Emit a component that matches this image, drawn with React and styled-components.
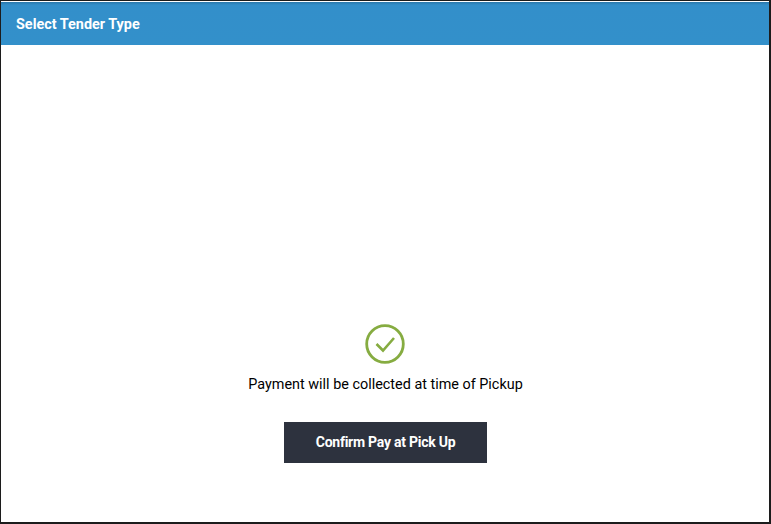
import React from "react";
import styled, { createGlobalStyle } from "styled-components";

const GlobalStyle = createGlobalStyle`
  html, body {
    margin: 0;
    padding: 0;
    background: #fff;
  }

  body {
    font-family: Roboto, "Liberation Sans", sans-serif;
  }
`;

const Modal = styled.div`
  box-sizing: border-box;
  width: 771px;
  height: 524px;
  display: flex;
  flex-direction: column;
  background: #fff;
  border: 1px solid #1c1c1c;
  border-right-width: 2px;
  border-bottom-width: 2px;
`;

const Header = styled.div`
  box-sizing: border-box;
  height: 43px;
  margin-top: 1px;
  padding: 2px 0 0 15px;
  display: flex;
  align-items: center;
  background: linear-gradient(#2a77aa 0, #338fca 3px, #3390ca 100%);
  color: #fff;
  font-size: 14.4px;
  font-weight: 700;
`;

const Body = styled.div`
  flex: 1;
  display: flex;
  flex-direction: column;
  align-items: center;
  padding-top: 279px;
`;

const Icon = styled.svg`
  display: block;
  width: 40px;
  height: 40px;
  color: #86ac41;
`;

const Message = styled.p`
  margin: 12px 0 0;
  padding-left: 1px;
  font-size: 14.4px;
  line-height: 18px;
  color: #000;
`;

const ConfirmButton = styled.button`
  margin-top: 28px;
  width: 203px;
  height: 41px;
  border: none;
  padding: 0 0 2px 1px;
  background: #2d323e;
  color: #fff;
  font-family: inherit;
  font-size: 14px;
  font-weight: 700;
  letter-spacing: -0.25px;
`;

export default function App() {
  return (
    <>
      <GlobalStyle />
      <Modal>
        <Header>Select Tender Type</Header>
        <Body>
          <Icon viewBox="0 0 40 40" fill="none" stroke="currentColor">
            <circle cx="20" cy="20" r="18.3" strokeWidth="2.8" />
            <path d="M11.5 20l6.5 6.5L29 14" strokeWidth="2.6" />
          </Icon>
          <Message>Payment will be collected at time of Pickup</Message>
          <ConfirmButton>Confirm Pay at Pick Up</ConfirmButton>
        </Body>
      </Modal>
    </>
  );
}
